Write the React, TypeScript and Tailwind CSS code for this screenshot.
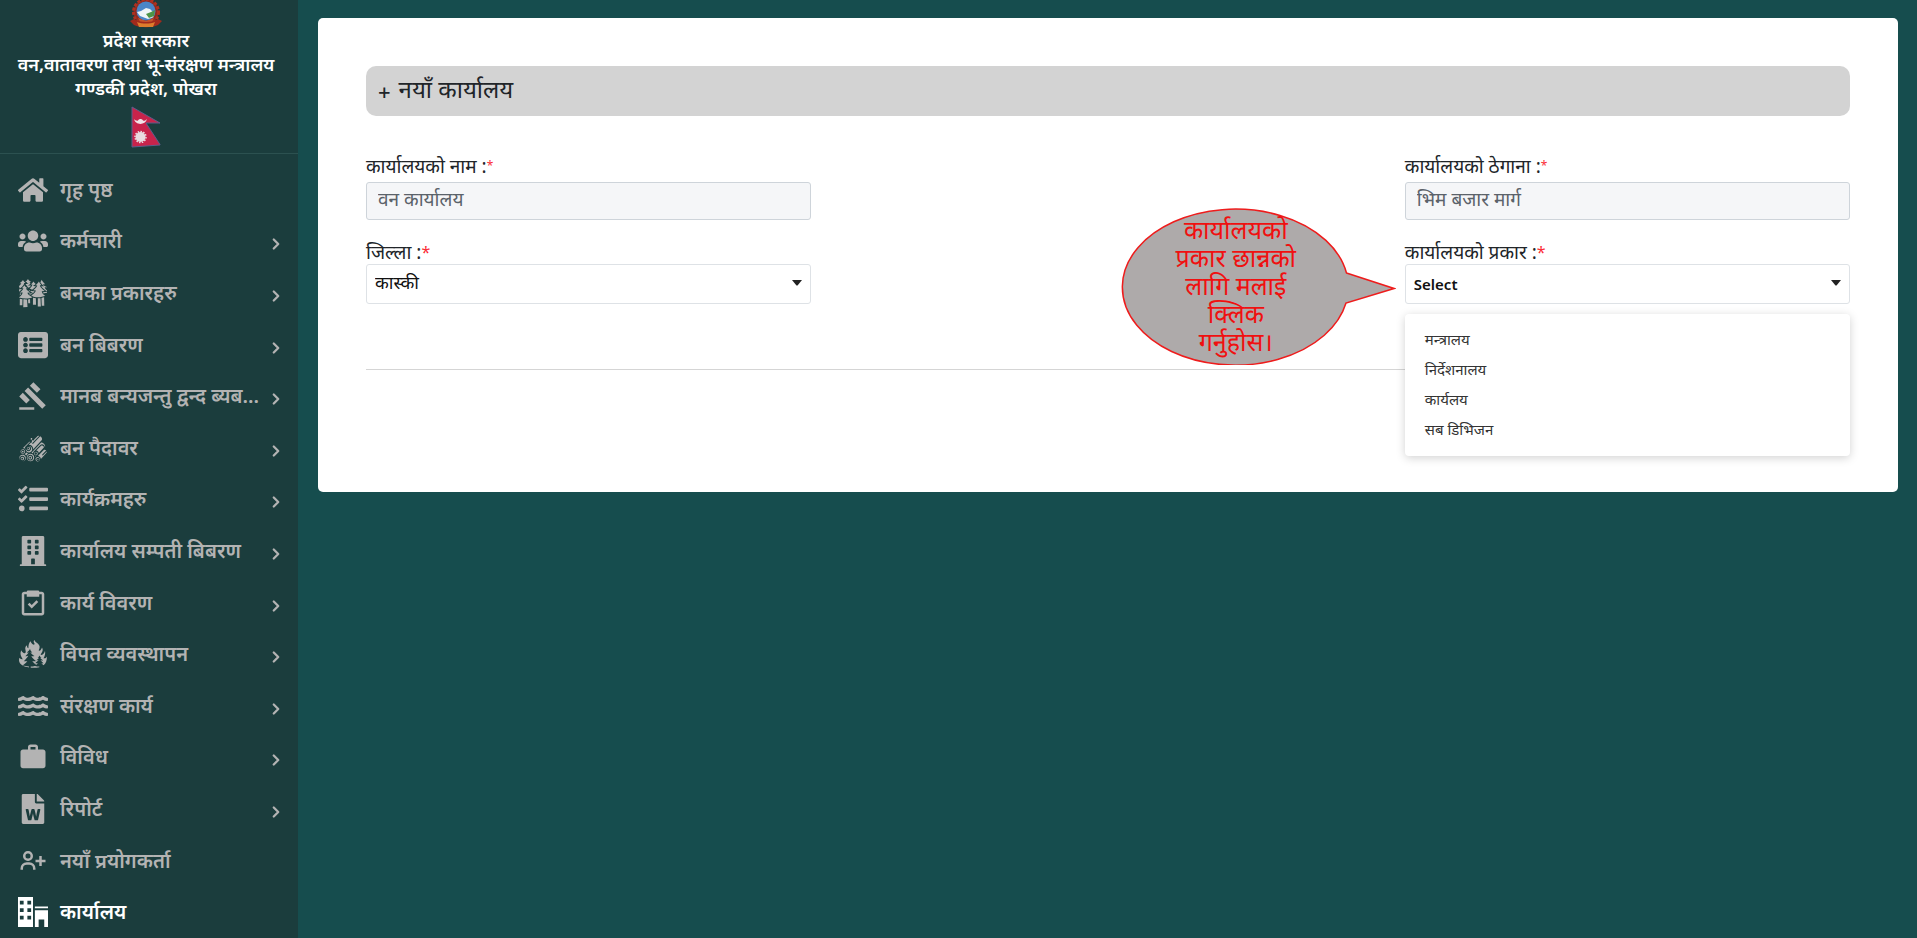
import type { ReactNode } from "react";
import type { IconType } from "react-icons";
import { FaHome, FaUsers, FaListAlt, FaTasks, FaBuilding, FaWater, FaFileWord } from "react-icons/fa";
import { BiTask, BiUserPlus } from "react-icons/bi";
import { GiBurningForest, GiForest, GiWoodPile } from "react-icons/gi";
import { MdGavel, MdWork } from "react-icons/md";
import { ImOffice } from "react-icons/im";
import { FiChevronRight } from "react-icons/fi";

type Item = { label: string; icon: IconType; nested?: boolean; active?: boolean };

const items: Item[] = [
  { label: "गृह पृष्ठ", icon: FaHome },
  { label: "कर्मचारी", icon: FaUsers, nested: true },
  { label: "बनका प्रकारहरु", icon: GiForest, nested: true },
  { label: "बन बिबरण", icon: FaListAlt, nested: true },
  { label: "मानब बन्यजन्तु द्वन्द ब्यब...", icon: MdGavel, nested: true },
  { label: "बन पैदावर", icon: GiWoodPile, nested: true },
  { label: "कार्यक्रमहरु", icon: FaTasks, nested: true },
  { label: "कार्यालय सम्पती बिबरण", icon: FaBuilding, nested: true },
  { label: "कार्य विवरण", icon: BiTask, nested: true },
  { label: "विपत व्यवस्थापन", icon: GiBurningForest, nested: true },
  { label: "संरक्षण कार्य", icon: FaWater, nested: true },
  { label: "विविध", icon: MdWork, nested: true },
  { label: "रिपोर्ट", icon: FaFileWord, nested: true },
  { label: "नयाँ प्रयोगकर्ता", icon: BiUserPlus },
  { label: "कार्यालय", icon: ImOffice, active: true },
];

const officeTypes = ["मन्त्रालय", "निर्देशनालय", "कार्यलय", "सब डिभिजन"];

function Emblem() {
  return (
    <svg viewBox="0 0 32 28" className="h-7 w-8" aria-hidden="true">
      <circle cx="16" cy="12" r="12.5" fill="#8d2b22" />
      <circle cx="16" cy="12" r="12.5" fill="none" stroke="#b0301f" strokeWidth="3" strokeDasharray="3 1.5" />
      <circle cx="16" cy="11" r="9.5" fill="#4a86c8" />
      <path d="M7 12l4-1 5-3 4 1 3 3-3 2 4 3-6 2-8-3z" fill="#eef4f6" />
      <path d="M16 14l5-2 4-2-1 6-5 2z" fill="#4d9447" />
      <path d="M8 18l8 3 8-3-2 4h-12z" fill="#c7552c" />
      <path d="M0 21l4-2c5 4 19 4 24 0l4 2-4 4c-6 3-18 3-24 0z" fill="#a32a1c" />
      <path d="M7 22c5 2 13 2 18 0l-2 5H9z" fill="#dd7d2c" />
    </svg>
  );
}

function Flag() {
  return (
    <svg viewBox="0 0 30 42" className="h-[42px] w-[30px]" aria-hidden="true">
      <path d="M1 1l28 16H15l14 21.500V39L1 41z" fill="#c8234b" stroke="#5b5f8c" strokeWidth="1" />
      <path d="M3 13c1 6 11 7 13 0-2 2-3 2-4 1.500-1-2-4-2-5 0-1 .5-3 0-4-1.500z" fill="#f1e3e8" />
      <circle cx="9.500" cy="31" r="5" fill="#e9dbe0" />
      <circle cx="9.500" cy="31" r="5.500" fill="none" stroke="#e9dbe0" strokeWidth="1.500" strokeDasharray="1.500 1.300" />
    </svg>
  );
}

function Sidebar() {
  return (
    <aside className="flex w-[298px] shrink-0 flex-col bg-[#1b3d3d]">
      <header className="flex flex-col items-center border-b border-[#2c5150] pr-1.5 pb-[5px] text-center text-lg leading-6 font-semibold text-white">
        <Emblem />
        <p>प्रदेश सरकार</p>
        <p>वन,वातावरण तथा भू-संरक्षण मन्त्रालय</p>
        <p className="mb-1.5">गण्डकी प्रदेश, पोखरा</p>
        <Flag />
      </header>
      <nav className="flex flex-1 flex-col pt-2.5">
        {items.map(({ label, icon: Icon, nested, active }) => (
          <a
            key={label}
            href="#"
            className={`flex flex-1 items-center pr-[13px] pl-[18px] text-xl leading-7 font-semibold ${active ? "text-white" : "text-[#b3b3b3]"}`}
          >
            <Icon className="size-[30px] shrink-0" />
            <span className="ml-3 whitespace-nowrap">{label}</span>
            {nested && <FiChevronRight className="mt-1.5 ml-auto size-[18px] shrink-0" strokeWidth={3} />}
          </a>
        ))}
      </nav>
    </aside>
  );
}

function FieldLabel({ id, small, children }: { id: string; small?: boolean; children: ReactNode }) {
  return (
    <label htmlFor={id} className="flex h-6 items-center text-[19px] leading-6 text-[#212529]">
      {children} :<span className={`text-red-500 ${small ? "text-xs" : "text-base"}`}>*</span>
    </label>
  );
}

function TextField({ id, label, value }: { id: string; label: string; value: string }) {
  return (
    <div className="flex flex-col gap-1">
      <FieldLabel id={id} small>
        {label}
      </FieldLabel>
      <input
        id={id}
        defaultValue={value}
        className="h-[38px] w-full rounded-[3px] border border-[#ced4da] bg-[#f5f6f8] px-[11px] pb-1 text-[19px] text-[#5b626a]"
      />
    </div>
  );
}

function SelectField({ id, label, value, strong }: { id: string; label: string; value: string; strong?: boolean }) {
  return (
    <div>
      <FieldLabel id={id}>{label}</FieldLabel>
      <div className="relative">
        <select
          id={id}
          className={`h-10 w-full appearance-none rounded-[3px] border border-[#dee2e6] bg-white px-2 text-[#111] ${strong ? "text-[15px] font-semibold" : "pb-1 text-lg"}`}
        >
          <option>{value}</option>
        </select>
        <svg viewBox="0 0 10 6" className="pointer-events-none absolute top-4 right-[9px] h-1.5 w-2.5" aria-hidden="true">
          <path d="M0 0h10L5.500 5.500h-1z" fill="#222" />
        </svg>
      </div>
    </div>
  );
}

function Hint() {
  return (
    <div role="tooltip" className="absolute right-full bottom-[-61px] mr-[9px] h-[158px] w-[275px]">
      <svg viewBox="0 0 275 158" className="absolute inset-0 size-full" aria-hidden="true">
        <path d="M225.500 66L273 81.500L225 96A113 78 0 1 1 225.500 66z" fill="#aeaaaa" stroke="#ee1c1c" strokeWidth="1.500" />
      </svg>
      <p className="relative flex h-full w-[230px] flex-col items-center justify-center pb-0.5 text-[25px] leading-7 text-[#f01010]">
        <span>कार्यालयको</span>
        <span>प्रकार छान्नको</span>
        <span>लागि मलाई</span>
        <span>क्लिक</span>
        <span>गर्नुहोस।</span>
      </p>
    </div>
  );
}

function TypeMenu() {
  return (
    <ul
      role="listbox"
      className="absolute inset-x-0 top-full mt-2.5 rounded bg-white py-2.5 pb-3 shadow-[0_2px_10px_rgba(0,0,0,0.18)]"
    >
      {officeTypes.map((type) => (
        <li key={type} role="option" aria-selected={false} className="px-5 text-[15px] leading-[30px] text-[#333]">
          {type}
        </li>
      ))}
    </ul>
  );
}

export default function App() {
  return (
    <div className="flex min-h-screen bg-[#164d4e] font-['Noto_Sans','Noto_Sans_Devanagari',sans-serif]">
      <Sidebar />
      <main className="flex-1 pt-[18px] pr-[19px] pl-5">
        <section className="rounded-[5px] bg-white px-12 pt-12 pb-[122px]">
          <h1 className="flex items-center gap-2 rounded-[10px] bg-[#d3d3d3] px-3 pt-[7px] pb-[11px] text-2xl leading-8 text-[#212529]">
            <span className="pt-1 text-[22px] leading-7 font-medium">+</span>
            <span>नयाँ कार्यालय</span>
          </h1>
          <form className="mt-[38px] flex justify-between border-b border-[#d5d5d5] pb-[65px]">
            <div className="flex w-[30%] flex-col gap-5">
              <TextField id="office-name" label="कार्यालयको नाम" value="वन कार्यालय" />
              <SelectField id="district" label="जिल्ला" value="कास्की" />
            </div>
            <div className="flex w-[30%] flex-col gap-5">
              <TextField id="office-address" label="कार्यालयको ठेगाना" value="भिम बजार मार्ग" />
              <div className="relative">
                <SelectField id="office-type" label="कार्यालयको प्रकार" value="Select" strong />
                <TypeMenu />
                <Hint />
              </div>
            </div>
          </form>
        </section>
      </main>
    </div>
  );
}
